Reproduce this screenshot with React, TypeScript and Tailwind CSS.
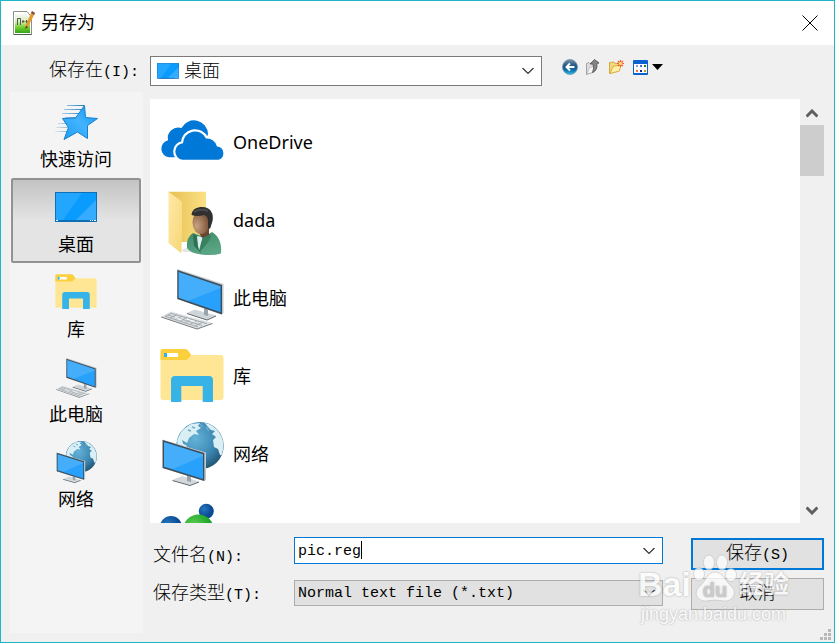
import { useState, type ReactNode } from "react";

const UI = "font-['Noto_Sans','Noto_Sans_CJK_SC',sans-serif]";
const SONG = "font-['Liberation_Mono','Noto_Sans_CJK_SC',monospace]";

function OneDriveIcon() {
  return (
    <svg viewBox="0 0 64 64" className="h-full w-full overflow-visible" fill="#0078d7">
      <path d="M9 47.300A8.700 8.700 0 0 1 8 30.200A10.500 10.500 0 0 1 21.500 18A14 14 0 0 1 48 24L44 35L20 47.300Z" />
      <path
        d="M22.500 49.800A8.300 8.300 0 0 1 23 33.300A12 12 0 0 1 46 28.600A10 10 0 0 1 57 36.500A6.800 6.800 0 0 1 58.500 49.800Z"
        stroke="#fff"
        strokeWidth="4.4"
      />
      <path d="M22.500 49.800A8.300 8.300 0 0 1 23 33.300A12 12 0 0 1 46 28.600A10 10 0 0 1 57 36.500A6.800 6.800 0 0 1 58.500 49.800Z" />
    </svg>
  );
}

function UserFolderIcon() {
  return (
    <svg viewBox="0 0 64 64" className="h-full w-full overflow-visible">
      <defs>
        <linearGradient id="uf-back" x1="0" x2="1">
          <stop offset="0" stopColor="#e7c052" />
          <stop offset="1" stopColor="#fbe084" />
        </linearGradient>
        <linearGradient id="uf-front" x1="0" x2="1" y2="1">
          <stop offset="0" stopColor="#ffe9a6" />
          <stop offset="1" stopColor="#f6d778" />
        </linearGradient>
        <radialGradient id="uf-face" cx="0.25" cy="0.65" r="0.7">
          <stop offset="0" stopColor="#c9a284" />
          <stop offset="1" stopColor="#7b5438" />
        </radialGradient>
        <linearGradient id="uf-body" x1="0" x2="0.4" y2="1">
          <stop offset="0" stopColor="#3f8968" />
          <stop offset="1" stopColor="#5aa584" />
        </linearGradient>
      </defs>
      <path d="M21 62L32 58V64L24 64Z" fill="#e4e6e6" />
      <path d="M8.500 3.700H46V54H20Z" fill="url(#uf-back)" />
      <path d="M8.500 3.700L22 13.500V44L21.300 65.300L8.500 55Z" fill="url(#uf-front)" />
      <path d="M33 45L44 49L52 44C59 48 62 56 61 65.500Q53 68 41 66.500Q30 65 27 60Q26 49 33 45Z" fill="url(#uf-body)" />
      <path d="M36 48L43 49L39 62Z" fill="#dfeef3" />
      <path d="M33 46L37 48L38 60L42 66L34 58Z" fill="#2d7152" />
      <path d="M44 47L50 46Q52 49 48 54L40 64Q40 55 44 47Z" fill="#38805e" />
      <path d="M37 42L49 38L49 47L42 50Z" fill="#6a4630" />
      <ellipse cx="41" cy="34.500" rx="8.500" ry="11.500" fill="url(#uf-face)" />
      <path d="M31.500 27C32 21 37 19 42 19C51 19 54 26 52.500 33L50 41L48 40Q48 35 48 33Q48 28 44 27Q37 29 31.500 27Z" fill="#303030" />
      <path d="M34 24Q40 20 48 23" stroke="#4a4a4a" strokeWidth="2" fill="none" />
    </svg>
  );
}

function ComputerIcon() {
  return (
    <svg viewBox="0 0 64 64" className="h-full w-full overflow-visible">
      <path d="M27 47L35 43.500L56 49.500L47 53.500Z" fill="#cfd5d9" />
      <path d="M27 47L47 53.500L56 49.500V50.500L47 54.500L27 48Z" fill="#59636a" />
      <path d="M44 41L48 42V50L44 49Z" fill="#9aa4ab" />
      <path d="M17.300 3L63.500 18V47.500L61.500 48.500L17.300 33Z" fill="#c2c9ce" />
      <path d="M17.300 4L62 19V48.500L17.300 33Z" fill="#3d4d59" />
      <path d="M18.600 6L60.600 20.200V46.300L18.600 31.700Z" fill="#27a1fb" />
      <path d="M18.600 6L60.600 20.200V22L28 35L18.600 31.700Z" fill="#fff" opacity="0.14" />
      <path d="M1.300 50.500L11 45.500L52.500 57L37 62.500Z" fill="#dde1e3" />
      <path d="M1.300 50.500L37 62.500L52.500 57V58L37 63.500L1.300 51.500Z" fill="#6f777c" />
      <path
        d="M5 50.500L12 47M5 50.300L38 61M8 49L42 59.500M11 47.300L47 57.700M10 52L17 48.500M15 53.700L22 50M20 55.300L27 51.300M25 57L32 53M30 58.500L37 54.500M35 60L43 56"
        stroke="#a4abaf"
        strokeWidth="1"
      />
      <path d="M15 51L22 54M27 53L35 56" stroke="#fff" strokeWidth="1" />
    </svg>
  );
}

function LibraryIcon() {
  return (
    <svg viewBox="0 0 64 64" className="h-full w-full overflow-visible">
      <path d="M0.500 11H61Q63.500 11 63.500 14V53Q63.500 56 61 56H3Q0.500 56 0.500 53Z" fill="#ffe694" />
      <path d="M2.500 5H25Q27 5 28 6.500L31.300 11L27 15.500Q26.500 16 25 16H0.500V7Q0.500 5 2.500 5Z" fill="#fccf3c" />
      <path d="M4 9H18V13H4Z" fill="#fff" />
      <path d="M4 9H7V13H4Z" fill="#35b1e6" />
      <path d="M11 58V36Q11 32 15 32H49Q53 32 53 36V58H42.700V42H21.300V58Z" fill="#38b3e8" />
    </svg>
  );
}

function NetworkIcon() {
  return (
    <svg viewBox="0 0 64 64" className="h-full w-full overflow-visible">
      <defs>
        <radialGradient id="net-globe" cx="0.4" cy="0.35" r="0.7">
          <stop offset="0" stopColor="#65b3d9" />
          <stop offset="0.6" stopColor="#3d88b3" />
          <stop offset="1" stopColor="#20516f" />
        </radialGradient>
        <clipPath id="net-clip">
          <circle cx="40" cy="23.700" r="23.400" />
        </clipPath>
      </defs>
      <circle cx="40" cy="23.700" r="23.700" fill="url(#net-globe)" />
      <g clipPath="url(#net-clip)" fill="#d9eff4">
        <path d="M17 18L22 8L31 2L40 1L38 4L41 6L36 9L39 13L34 12L29 16L27 21L22 18L24 24L20 23L18 27Z" />
        <path d="M44 0L52 3L60 10L64 20V34L60 33L58 27L54 25L53 18L56 15L52 12L55 9L51 8L48 5Z" />
        <path d="M20 21L26 23L29 28L26 29Z" />
      </g>
      <path d="M40 2L43 5M28 8L31 9M32 5L35 6M46 5L49 9" stroke="#6dacc9" strokeWidth="1.5" />
      <path d="M12.500 58L22 54L39 59.500L30 63Z" fill="#d2d8dc" />
      <path d="M12.500 58L30 63L39 59.500V60.500L30 64L12.500 59Z" fill="#59636a" />
      <path d="M27 53L31 54V60L27 59Z" fill="#9aa4ab" />
      <path d="M2.300 17.500L46 30.500V58L44 59L2.300 46Z" fill="#c2c9ce" />
      <path d="M2.700 18L44.300 31V59L2.700 46Z" fill="#3d4d59" />
      <path d="M4 20L43 32.200V57L4 44.700Z" fill="#27a1fb" />
      <path d="M4 20L43 32.200V34L13 47L4 44.700Z" fill="#fff" opacity="0.14" />
    </svg>
  );
}

function HomeGroupIcon() {
  return (
    <svg viewBox="0 0 64 64" className="h-full w-full overflow-visible">
      <defs>
        <radialGradient id="hg-blue" cx="0.35" cy="0.35">
          <stop offset="0" stopColor="#2577bd" />
          <stop offset="1" stopColor="#0b4a94" />
        </radialGradient>
        <radialGradient id="hg-green" cx="0.35" cy="0.35">
          <stop offset="0" stopColor="#5ccf50" />
          <stop offset="1" stopColor="#20a52c" />
        </radialGradient>
      </defs>
      <circle cx="11" cy="27" r="11" fill="url(#hg-blue)" />
      <circle cx="46.300" cy="11.300" r="7.500" fill="url(#hg-blue)" />
      <circle cx="38.500" cy="30" r="15.500" fill="url(#hg-green)" />
    </svg>
  );
}

function QuickAccessIcon() {
  return (
    <svg viewBox="0 0 42 42" className="h-full w-full overflow-visible">
      <defs>
        <linearGradient id="qa-star" x1="0" y1="1" x2="1" y2="0">
          <stop offset="0" stopColor="#1e9bf5" />
          <stop offset="0.5" stopColor="#42b4ff" />
          <stop offset="1" stopColor="#1590ee" />
        </linearGradient>
        <linearGradient id="qa-trail" x1="0" x2="1">
          <stop offset="0" stopColor="#1a7fc4" stopOpacity="0.1" />
          <stop offset="1" stopColor="#1a7fc4" />
        </linearGradient>
      </defs>
      <g fill="url(#qa-trail)">
        <path d="M12 4H29V5H12ZM9 8H27V9H9ZM7 12H24V13H7ZM10 16H22V17H10ZM3 22H12V23H3ZM1 26H13V27H1ZM0 30H12V31H0Z" />
      </g>
      <path
        d="M29.500 4.500L30.500 16.500L42.500 17.500L32.500 24.500V37.500L22.500 31L9 38.500L13.500 26.500L7.500 17.500L20.500 17Z"
        fill="url(#qa-star)"
        stroke="#1280cf"
        strokeLinejoin="round"
      />
    </svg>
  );
}

function DesktopIcon() {
  return (
    <svg viewBox="0 0 42 30" className="h-full w-full">
      <path d="M0 0H42V30H0Z" fill="#0c6fb8" />
      <path d="M1 1H41V28H1Z" fill="#0a9bff" />
      <path d="M1 1H27L8 28H1Z" fill="#23a6ff" />
      <path d="M41 8V28H21Z" fill="#35acff" />
      <path d="M1 28H3V29H1ZM35 28H36V29H35ZM37 28H38V29H37ZM39 28H41V29H39Z" fill="#fff" />
    </svg>
  );
}

function AppIcon() {
  return (
    <svg viewBox="0 0 24 26" className="h-[26px] w-6">
      <defs>
        <linearGradient id="app-page" x1="0" x2="0" y2="1">
          <stop offset="0" stopColor="#f7f8f5" />
          <stop offset="0.4" stopColor="#d7ebb9" />
          <stop offset="0.7" stopColor="#74cf2c" />
          <stop offset="1" stopColor="#35a31a" />
        </linearGradient>
      </defs>
      <path d="M1.500 1.500H15L19.500 7V24.500H1.500Z" fill="#fff" stroke="#8d9188" />
      <path d="M3 4H14L18 8V23H3Z" fill="url(#app-page)" />
      <path d="M2 24.500H19.500" stroke="#545950" />
      <path d="M5.500 15V8.500H8.500V15M10 11.500H12.500M11 10V13M13.500 11.500H16M14.500 10V13" stroke="#4e5b46" fill="none" />
      <path d="M20 1L23 3L16 17L13 19L13.500 15.500Z" fill="#e29c2b" />
      <path d="M20 1L23 3L22 5L19 3Z" fill="#7b5260" />
      <path d="M14 16L16 17L13 19Z" fill="#3b3427" />
    </svg>
  );
}

function Chevron() {
  return (
    <svg viewBox="0 0 12 7" className="pointer-events-none absolute top-1/2 right-2 h-[7px] w-3 -translate-y-1/2" fill="none" stroke="#333">
      <path d="M0.500 0.500L6 6L11.500 0.500" strokeWidth="1.2" />
    </svg>
  );
}

function ScrollArrow({ down = false }: { down?: boolean }) {
  return (
    <button
      type="button"
      aria-label={down ? "向下滚动" : "向上滚动"}
      className={`flex h-[26px] w-6 shrink-0 items-center justify-center ${down ? "" : "pt-0.5"}`}
    >
      <svg viewBox="0 0 12 9" className="h-[9px] w-3" fill="none" stroke="#5f5f5f" strokeWidth="3">
        <path d={down ? "M0.500 1.500L6 7L11.500 1.500" : "M0.500 7.500L6 2L11.500 7.500"} />
      </svg>
    </button>
  );
}

function Accel({ text, k, colon = true }: { text: string; k: string; colon?: boolean }) {
  return (
    <>
      <span className="text-[18px] font-light">{text}</span>({k}){colon && ":"}
    </>
  );
}

const places: { name: string; icon: ReactNode; wide?: boolean }[] = [
  { name: "快速访问", icon: <QuickAccessIcon /> },
  { name: "桌面", icon: <DesktopIcon />, wide: true },
  { name: "库", icon: <LibraryIcon /> },
  { name: "此电脑", icon: <ComputerIcon /> },
  { name: "网络", icon: <NetworkIcon /> },
];

const files: { name: string; icon: ReactNode }[] = [
  { name: "OneDrive", icon: <OneDriveIcon /> },
  { name: "dada", icon: <UserFolderIcon /> },
  { name: "此电脑", icon: <ComputerIcon /> },
  { name: "库", icon: <LibraryIcon /> },
  { name: "网络", icon: <NetworkIcon /> },
  { name: "", icon: <HomeGroupIcon /> },
];

function Toolbar() {
  return (
    <div className="flex w-[292px] shrink-0 items-start gap-[7px] pt-[3px] pl-5">
      <button type="button" aria-label="后退" className="h-4 w-4">
        <svg viewBox="0 0 16 16">
          <defs>
            <linearGradient id="tb-back" x1="0" x2="0" y2="1">
              <stop offset="0" stopColor="#7895ab" />
              <stop offset="0.45" stopColor="#17517f" />
              <stop offset="0.7" stopColor="#0f6fae" />
              <stop offset="1" stopColor="#2fc1ee" />
            </linearGradient>
          </defs>
          <circle cx="8" cy="8" r="7.500" fill="url(#tb-back)" stroke="#6f95b0" strokeWidth="0.8" />
          <path d="M12.500 8H5M8 4.500L4.500 8L8 11.500" stroke="#fff" strokeWidth="2" fill="none" />
        </svg>
      </button>
      <button type="button" aria-label="向上一级" className="h-4 w-4">
        <svg viewBox="0 0 16 16">
          <path d="M1.500 4.500L4 3.500L5 4.500L9 4V13L1.500 15.500Z" fill="#dedede" stroke="#a2a2a2" />
          <path d="M2 15L4.500 8.500L10 7L9 13Z" fill="#f8f8f8" stroke="#b0b0b0" strokeWidth="0.7" />
          <path d="M5 5L9.500 0.500L14 4L11.800 4.500Q13 11 7.500 13.500Q9.500 9 8 5Z" fill="#858585" stroke="#4c4c4c" strokeWidth="0.8" />
        </svg>
      </button>
      <button type="button" aria-label="新建文件夹" className="h-4 w-4">
        <svg viewBox="0 0 16 16">
          <path d="M1.500 14.500V3.500L6 3L7 4.500L11 4V12Z" fill="#f4d778" stroke="#d3a93f" />
          <path d="M2 14.500L5 7.500L13 6L11.500 12Z" fill="#fff0a9" stroke="#d9b147" />
          <path d="M12.500 1V8M9 4.500H16M10 2L15 7M15 2L10 7" stroke="#f2592b" strokeWidth="1.2" />
          <circle cx="12.500" cy="4.500" r="1.600" fill="#ffe38b" />
        </svg>
      </button>
      <button type="button" aria-label="查看菜单" className="flex h-4 w-8 items-center justify-end gap-1">
        <svg viewBox="0 0 15 15" className="h-[15px] w-[15px] shrink-0">
          <rect width="15" height="15" rx="1" fill="#0a63cf" />
          <path d="M1 4H14V13H1Z" fill="#fff" />
          <path d="M3 5H5V7H3Z" fill="#9a93d0" />
          <path d="M7 5H9V7H7Z" fill="#3f6fd0" />
          <path d="M11 5H13V7H11Z" fill="#1e8b2b" />
          <path d="M3 10H5V12H3Z" fill="#ff6e3c" />
          <path d="M7 10H9V12H7Z" fill="#14288e" />
          <path d="M11 10H13V12H11Z" fill="#c9990d" />
        </svg>
        <svg viewBox="0 0 11 6" className="h-1.5 w-[11px] shrink-0">
          <path d="M0 0H11L5.500 6Z" fill="#000" />
        </svg>
      </button>
    </div>
  );
}

function Watermark() {
  return (
    <div className="pointer-events-none absolute right-[45px] bottom-4 flex flex-col items-center font-['Liberation_Sans','Noto_Sans_CJK_SC',sans-serif] text-white opacity-75 [text-shadow:0_0_2px_#888]">
      <div className="flex items-end">
        <span className="text-[34px] leading-9 font-bold">Bai</span>
        <span className="relative h-12 w-12">
          <svg viewBox="0 0 48 48" className="h-12 w-12" fill="#fff" stroke="#bbb" strokeWidth="0.7">
            <ellipse cx="8" cy="20" rx="5.500" ry="6.500" />
            <ellipse cx="18" cy="8.500" rx="5.500" ry="7.500" />
            <ellipse cx="31" cy="8.500" rx="5.500" ry="7.500" />
            <ellipse cx="40" cy="21" rx="5.500" ry="6.500" />
            <path d="M24 18C32 18 34 27 40 32C47 38 42 48 33 47Q24 45 15 47C5 47 2 38 9 32C15 27 16 18 24 18Z" />
          </svg>
          <span className="absolute inset-x-0 bottom-0 text-center text-[20px] leading-6 font-bold text-[#c4c4c4]">du</span>
        </span>
        <span className="text-[25px] leading-9 font-bold">经验</span>
      </div>
      <span className="text-[18px] leading-6">jingyan.baidu.com</span>
    </div>
  );
}

export default function App() {
  const [place, setPlace] = useState("桌面");
  const [name, setName] = useState("pic.reg");

  return (
    <main className={`relative flex h-screen flex-col overflow-hidden border border-[#1fb6c4] bg-[#f0f0f0] text-[18px] text-black ${UI}`}>
      <header className="flex h-11 shrink-0 items-center bg-white pr-4 pl-[11px]">
        <AppIcon />
        <h1 className="flex-1 pb-0.5 pl-[5px] leading-6">另存为</h1>
        <button type="button" aria-label="关闭" className="h-4 w-4">
          <svg viewBox="0 0 16 16" stroke="#000">
            <path d="M0.500 0.500L15.500 15.500M15.500 0.500L0.500 15.500" />
          </svg>
        </button>
      </header>

      <div className={`flex shrink-0 pt-[11px] pb-1.5 pl-12 text-[15px] ${SONG}`}>
        <label htmlFor="folder" className="h-[30px] w-[101px] shrink-0 leading-[30px]">
          <Accel text="保存在" k="I" />
        </label>
        <div className="relative min-w-0 flex-1">
          <select id="folder" className="block h-[30px] w-full appearance-none border border-[#7a7a7a] bg-white pt-0.5 pl-[33px] text-[18px] font-light">
            <option>桌面</option>
          </select>
          <span className="pointer-events-none absolute top-[7px] left-[7px] h-4 w-[22px]">
            <DesktopIcon />
          </span>
          <Chevron />
        </div>
        <Toolbar />
      </div>

      <div className="flex min-h-0 flex-1 gap-[7px] pr-[10px] pb-[9px] pl-[9px]">
        <nav aria-label="位置" className="w-[133px] shrink-0 bg-[#f4f4f4] pt-px pr-0.5 pl-px">
          {places.map((p) => (
            <button
              key={p.name}
              type="button"
              aria-pressed={p.name === place}
              onClick={() => setPlace(p.name)}
              className={`flex h-[85px] w-full flex-col items-center gap-1 rounded-xs border-2 pt-1.5 ${
                p.name === place ? "border-[#929292] bg-linear-to-b from-[#c3c3c3] to-[#e4e4e4] to-50%" : "border-transparent"
              }`}
            >
              <span className="flex h-[42px] w-[42px] items-center">
                <span className={p.wide ? "h-[30px] w-[42px]" : "h-[42px] w-[42px]"}>{p.icon}</span>
              </span>
              <span className="leading-6">{p.name}</span>
            </button>
          ))}
        </nav>

        <div className="flex min-w-0 flex-1 flex-col pt-[7px]">
          <div className="flex min-h-0 flex-1">
            <ul className="min-w-0 flex-1 overflow-hidden bg-white pt-1">
              {files.map((f, i) => (
                <li key={i} className="flex h-[78px] items-center gap-[9px] pl-[10px]">
                  <span className="h-16 w-16 shrink-0">{f.icon}</span>
                  <span>{f.name}</span>
                </li>
              ))}
            </ul>
            <div className="flex w-6 shrink-0 flex-col">
              <ScrollArrow />
              <div className="flex-1">
                <div className="h-[51px] bg-[#cdcdcd]" />
              </div>
              <ScrollArrow down />
            </div>
          </div>

          <form className={`flex h-[110px] shrink-0 gap-7 text-[15px] ${SONG}`} onSubmit={(e) => e.preventDefault()}>
            <div className="flex min-w-0 flex-1 flex-col gap-4 pt-3.5 pl-[3px]">
              <div className="flex h-[27px] items-center">
                <label htmlFor="filename" className="w-[141px] shrink-0 pt-3">
                  <Accel text="文件名" k="N" />
                </label>
                <div className="relative flex-1">
                  <input
                    id="filename"
                    value={name}
                    onChange={(e) => setName(e.target.value)}
                    className="block h-[27px] w-full border border-[#0078d7] bg-white pt-0.5 pl-[3px] outline-none"
                  />
                  <span className="pointer-events-none absolute top-1 left-[67px] h-[18px] w-px bg-black" />
                  <Chevron />
                </div>
              </div>
              <div className="flex h-[26px] items-center">
                <label htmlFor="filetype" className="w-[141px] shrink-0 pt-0.5">
                  <Accel text="保存类型" k="T" />
                </label>
                <div className="relative flex-1">
                  <select id="filetype" className="block h-[26px] w-full appearance-none border border-[#adadad] bg-[#e1e1e1] pt-0.5 pl-[3px]">
                    <option>Normal text file (*.txt)</option>
                  </select>
                  <Chevron />
                </div>
              </div>
            </div>
            <div className="flex w-[133px] shrink-0 flex-col gap-2 pt-[15px]">
              <button type="submit" className="h-8 border-2 border-[#0078d7] bg-[#e1e1e1]">
                <Accel text="保存" k="S" colon={false} />
              </button>
              <button type="button" className="h-8 border border-[#adadad] bg-[#e1e1e1] text-[18px] font-light">
                取消
              </button>
            </div>
          </form>
        </div>
      </div>

      <svg viewBox="0 0 11 11" className="absolute right-[3px] bottom-0.5 h-[11px] w-[11px]" fill="#b8b8b8">
        <path d="M8 0H11V3H8ZM8 4H11V7H8ZM4 4H7V7H4ZM8 8H11V11H8ZM4 8H7V11H4ZM0 8H3V11H0Z" />
      </svg>
      <Watermark />
    </main>
  );
}
